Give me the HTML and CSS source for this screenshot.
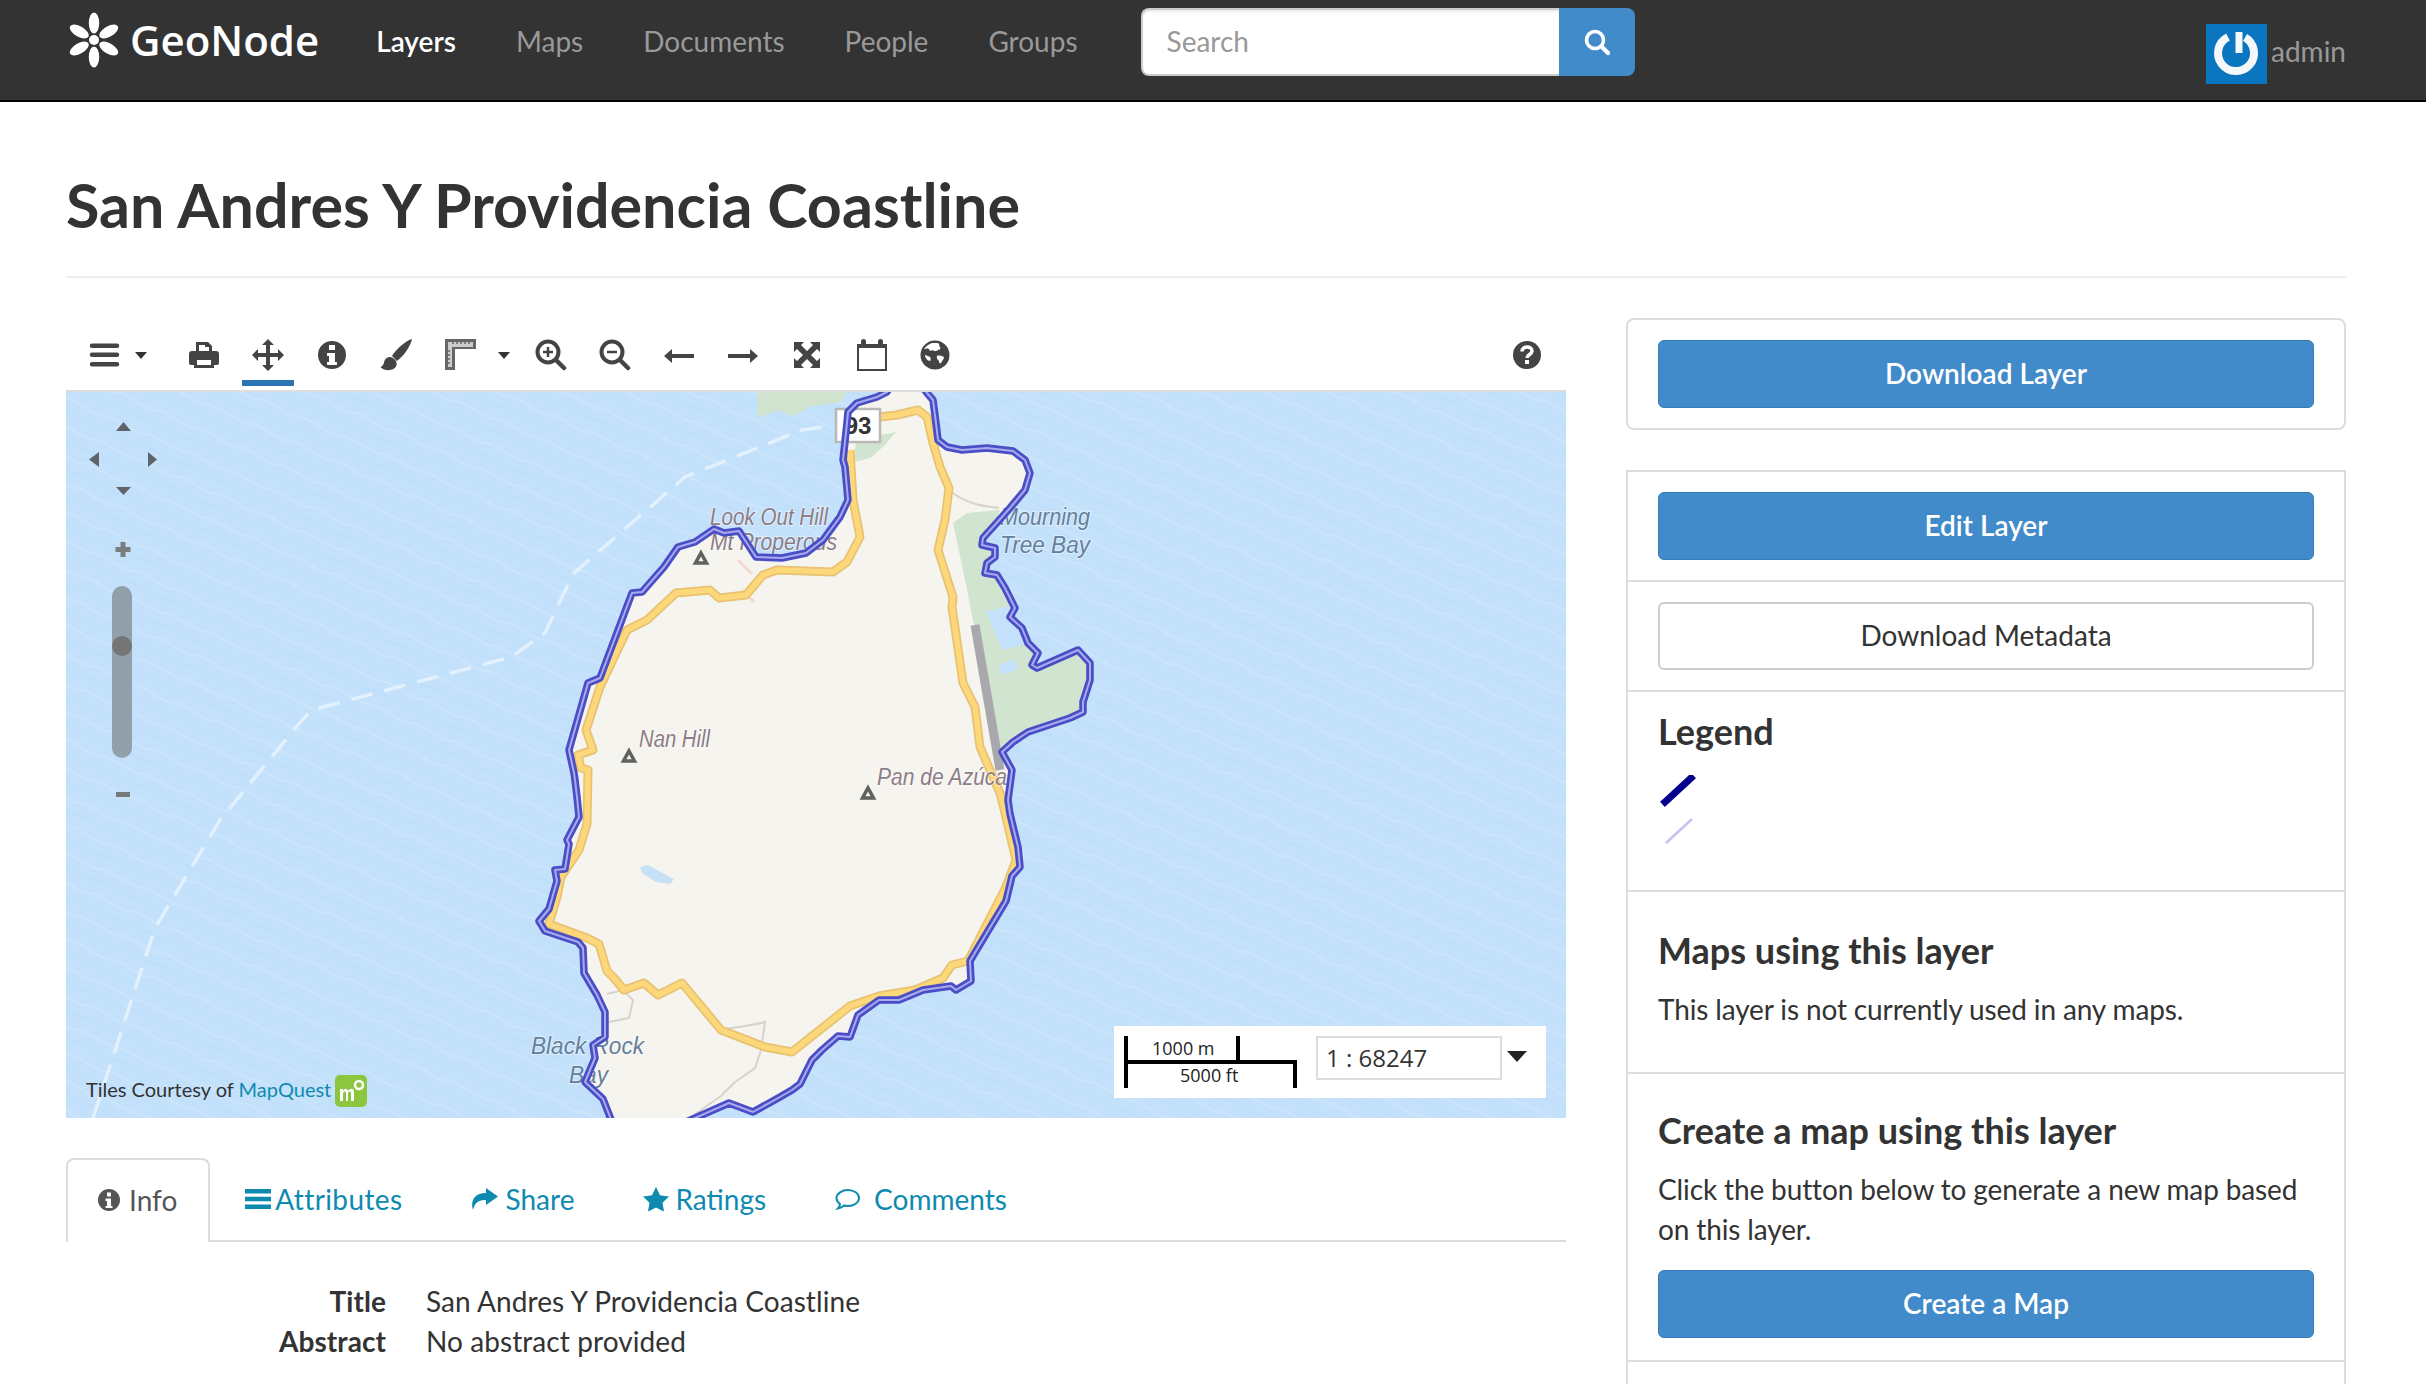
FILE: index.html
```html
<!DOCTYPE html>
<html lang="en">
<head>
<meta charset="utf-8">
<title>San Andres Y Providencia Coastline</title>
<link rel="stylesheet" href="styles.css">
</head>
<body>
<header class="navbar">
  <a class="brand">
    <svg class="brand-mark" viewBox="0 0 52 56">
      <g fill="#fff">
        <circle cx="26" cy="28" r="5"/>
        <ellipse cx="26" cy="11" rx="5.2" ry="10.5"/>
        <ellipse cx="26" cy="11" rx="5.2" ry="10.5" transform="rotate(60 26 28)"/>
        <ellipse cx="26" cy="11" rx="5.2" ry="10.5" transform="rotate(120 26 28)"/>
        <ellipse cx="26" cy="11" rx="5.2" ry="10.5" transform="rotate(180 26 28)"/>
        <ellipse cx="26" cy="11" rx="5.2" ry="10.5" transform="rotate(240 26 28)"/>
        <ellipse cx="26" cy="11" rx="5.2" ry="10.5" transform="rotate(300 26 28)"/>
      </g>
    </svg>
    <span class="brand-name">GeoNode</span>
  </a>
  <nav class="nav-links">
    <a class="nav-link is-active">Layers</a>
    <a class="nav-link">Maps</a>
    <a class="nav-link">Documents</a>
    <a class="nav-link">People</a>
    <a class="nav-link">Groups</a>
  </nav>
  <form class="search">
    <input class="search-input" type="text" placeholder="Search">
    <button class="search-btn" type="button" aria-label="Search">
      <svg class="search-icon" viewBox="0 0 28 28"><circle cx="12" cy="12" r="8.5" fill="none" stroke="#fff" stroke-width="3.6"/><path d="M18.5 18.5L25 25" stroke="#fff" stroke-width="4.2" stroke-linecap="round"/></svg>
    </button>
  </form>
  <div class="user">
    <svg class="avatar" viewBox="0 0 61 60">
      <rect width="61" height="60" fill="#0b76c0"/>
      <path d="M22 13A18 18 0 1 0 39 13.500" fill="none" stroke="#f4f8fb" stroke-width="8"/>
      <path d="M33 8V29" stroke="#f4f8fb" stroke-width="7"/>
    </svg>
    <span class="user-name">admin</span>
  </div>
</header>

<main class="page">
  <h1 class="title">San Andres Y Providencia Coastline</h1>
  <div class="columns">
    <section class="content">
      <div class="toolbar">
        <button class="tool tool-split" type="button">
          <svg class="ico" viewBox="0 0 32 32"><path d="M3 4.500h25a1.500 1.500 0 0 1 0 4.500H3a1.500 1.500 0 0 1 0-4.500zM3 13.500h25a1.500 1.500 0 0 1 0 4.500H3a1.500 1.500 0 0 1 0-4.500zM3 23h25a1.500 1.500 0 0 1 0 4.500H3A1.500 1.500 0 0 1 3 23z"/></svg>
          <span class="caret"></span>
        </button>
        <button class="tool" type="button">
          <svg class="ico" viewBox="0 0 32 32"><path d="M8 13V3h12l4 4v6h-3V8h-4V6H11v7z"/><path d="M4 12h24a3 3 0 0 1 3 3v9a2 2 0 0 1-2 2h-3v3H6v-3H3a2 2 0 0 1-2-2v-9a3 3 0 0 1 3-3zm5 9v5h14v-5z" fill-rule="evenodd"/></svg>
        </button>
        <button class="tool is-on" type="button">
          <svg class="ico" viewBox="0 0 32 32"><path d="M16 0l6 6h-4v8h8v-4l6 6-6 6v-4h-8v8h4l-6 6-6-6h4v-8H6v4l-6-6 6-6v4h8V6h-4z"/></svg>
        </button>
        <button class="tool" type="button">
          <svg class="ico" viewBox="0 0 32 32"><path fill-rule="evenodd" d="M16 2a14 14 0 1 1 0 28 14 14 0 0 1 0-28zM13 6v5h6V6zM11 14v3h2v6h-2v3h10v-3h-2v-9z"/></svg>
        </button>
        <button class="tool" type="button">
          <svg class="ico" viewBox="0 0 32 32"><path d="M32 0c-5 1-16 10-20 17l5 5C24 17 31 6 32 0z"/><path d="M10 18c-3.500 0-5.500 2.500-6 5.500-.4 2-1.500 3.500-3.500 4.500C5 33 15 32 16.500 26c1-3.500-2.500-7.500-6.500-8z"/></svg>
        </button>
        <button class="tool tool-split-r" type="button">
          <svg class="ico" viewBox="0 0 32 32"><path fill="#666" fill-rule="evenodd" d="M1 0h31v10H11v21H1zM4 3v25h4V8h21V3z"/><path fill="#ccc" d="M4 3h25v5H8v20H4z"/><path d="M9 3v2M13 3v2M17 3v2M21 3v2M25 3v2M4 12h2M4 16h2M4 20h2M4 24h2" stroke="#666" stroke-width="1.500"/></svg>
          <span class="caret"></span>
        </button>
        <button class="tool" type="button">
          <svg class="ico" viewBox="0 0 32 32"><circle cx="13" cy="13" r="10.500" fill="none" stroke="#444" stroke-width="4"/><path d="M21 21l8 8" stroke="#444" stroke-width="4.500" stroke-linecap="round"/><path d="M13 8v10M8 13h10" stroke="#444" stroke-width="2.500"/></svg>
        </button>
        <button class="tool" type="button">
          <svg class="ico" viewBox="0 0 32 32"><circle cx="13" cy="13" r="10.500" fill="none" stroke="#444" stroke-width="4"/><path d="M21 21l8 8" stroke="#444" stroke-width="4.500" stroke-linecap="round"/><path d="M8 13h10" stroke="#444" stroke-width="2.500"/></svg>
        </button>
        <button class="tool" type="button">
          <svg class="ico" viewBox="0 0 32 32"><path d="M31 15v4H9v5L1 17l8-7v5z"/></svg>
        </button>
        <button class="tool" type="button">
          <svg class="ico" viewBox="0 0 32 32"><path d="M1 15v4h22v5l8-7-8-7v5z"/></svg>
        </button>
        <button class="tool" type="button">
          <svg class="ico" viewBox="0 0 32 32"><path d="M3 3h10l-3 3 6 6 6-6-3-3h10v10l-3-3-6 6 6 6 3-3v10H19l3-3-6-6-6 6 3 3H3V19l3 3 6-6-6-6-3 3z"/></svg>
        </button>
        <button class="tool tool-cal" type="button">
          <svg class="ico" viewBox="0 0 32 32"><path fill-rule="evenodd" d="M1 5h4V2.500a2.500 2.500 0 0 1 5 0V5h12V2.500a2.500 2.500 0 0 1 5 0V5h4v27H1zM3 9v21h26V9z"/></svg>
        </button>
        <button class="tool" type="button">
          <svg class="ico" viewBox="0 0 32 32"><circle cx="16" cy="16" r="14.500"/><path fill="#fff" d="M13 4c-3 1-6 3-8 6 2 0 3-1 5 0 0 2 2 2 4 1 1 2 4 1 5 0 3 0 3-3 1-4 1-1 0-3-2-3zM18 17c2-1 5 0 7 1 0 2-2 4-3 6-1 1-2 0-2-2-1-1-3-3-2-5zM6 16c1 0 3 1 5 2 1 2 1 3 0 4-2 0-5-3-5-6z"/></svg>
        </button>
        <button class="tool tool-help" type="button">
          <svg class="ico" viewBox="0 0 32 32"><circle cx="16" cy="16" r="14"/><path d="M11 12.500c0-6 10-6 10-.5 0 3.500-5 3.500-5 7" fill="none" stroke="#fff" stroke-width="3.500"/><rect x="14" y="21" width="4" height="4" fill="#fff"/></svg>
        </button>
      </div>

      <div class="map">
        <svg class="map-canvas" viewBox="0 0 1500 728" preserveAspectRatio="none">
          <defs>
            <pattern id="waves" width="90" height="26" patternUnits="userSpaceOnUse" patternTransform="rotate(24)">
              <rect width="90" height="26" fill="#c3e1fb"/>
              <path d="M0 8c15-5 30 5 45 0s30 5 45 0" fill="none" stroke="#cae5fc" stroke-width="2.500"/>
              <path d="M0 20c15-4 30 4 45 0s30 4 45 0" fill="none" stroke="#bedef9" stroke-width="1.500"/>
            </pattern>
            <path id="road" d="M814 27L831 25 852 20 861 27 867 53 874 77 883 98 879 130 872 160 887 207 886 217 897 293 909 317 914 357 924 380 934 403 940 427 950 470 940 497 902 571 886 575 877 588 849 600 813 606 784 616 726 662 699 657 655 640 616 593 592 605 578 593 558 600 548 588 541 581 533 554 521 548 483 534 491 507 495 487 513 460 521 434 522 380 515 378 512 365 527 360 520 340 534 297 561 240 581 230 610 203 644 200 653 208 680 205 697 185 711 180 767 182 781 172 794 147 787 110 784 60"/>
            <path id="coast-east" d="M855-5L861 3 867 10 870 33 872 50 881 57 896 60 921 58 947 61 959 70 964 83 959 100 944 118 927 137 917 148 916 155 929 158 929 167 921 173 919 183 931 185 939 198 949 218 944 227 956 238 962 253 972 263 966 275 971 278 1012 260 1024 273 1024 290 1017 312 1017 322 1004 328 962 342 947 352 936 362 946 380 942 410 944 424 952 457 954 477 946 486 940 511 904 571 905 591 890 600 885 596 857 600 833 610 813 610 792 625 784 647 772 646 756 660 746 670 734 694 726 700 714 707 687 722 663 713 620 732"/>
            <path id="coast-west" d="M546 732L537 709 519 692 529 668 527 655 539 647 539 622 531 605 518 583 517 558 512 552 479 541 473 531 483 519 491 491 489 480 499 479 503 454 501 450 513 427 511 407 509 390 508 383 503 360 522 293 534 288 566 203 576 202 598 177 612 157 629 152 648 139 658 143 673 141 690 167 716 168 740 163 757 150 774 127 782 110 779 77 777 70 781 33 782 22 791 13 811 7 821 2 825-5"/>
          </defs>
          <rect width="1500" height="728" fill="url(#waves)"/>
          <path d="M27 728L89 538 154 430 236 330 246 320 445 267 479 243 498 203 508 183 619 87 736 40 757 37" fill="none" stroke="#e2f1fd" stroke-width="3.500" stroke-dasharray="22 12"/>
          <path d="M691 0h90l-5 12-30 4-20 10-14-6-20 8z" fill="#cfe3cf"/>
          <path fill="#f6f4ee" d="M855-5L861 3 867 10 870 33 872 50 881 57 896 60 921 58 947 61 959 70 964 83 959 100 944 118 927 137 917 148 916 155 929 158 929 167 921 173 919 183 931 185 939 198 949 218 944 227 956 238 962 253 972 263 966 275 971 278 1012 260 1024 273 1024 290 1017 312 1017 322 1004 328 962 342 947 352 936 362 946 380 942 410 944 424 952 457 954 477 946 486 940 511 904 571 905 591 890 600 885 596 857 600 833 610 813 610 792 625 784 647 772 646 756 660 746 670 734 694 726 700 714 707 687 722 663 713 620 732 546 732 537 709 519 692 529 668 527 655 539 647 539 622 531 605 518 583 517 558 512 552 479 541 473 531 483 519 491 491 489 480 499 479 503 454 501 450 513 427 511 407 509 390 508 383 503 360 522 293 534 288 566 203 576 202 598 177 612 157 629 152 648 139 658 143 673 141 690 167 716 168 740 163 757 150 774 127 782 110 779 77 777 70 781 33 782 22 791 13 811 7 821 2 825-5z"/>
          <path fill="#d0e4d0" d="M887 133L901 123 934 120 927 137 917 148 916 155 929 158 929 167 921 173 919 183 931 185 939 198 949 218 944 227 956 238 962 253 972 263 966 275 971 278 1012 260 1024 273 1024 290 1017 312 1017 322 1004 328 962 342 947 352 936 362 927 323 911 250 897 180z"/>
          <path fill="#d0e4d0" d="M790 50l40-8-12 14-14 12-16 4z"/>
          <path fill="#c3e1fb" d="M920 222l22-6 10 20 8 18-24 6-8-20zM932 275l16-6 4 10-16 6z"/>
          <path fill="#c6e0f6" d="M574 477l8-2 26 14-4 5-14-2-14-9z"/>
          <path d="M909 235l25 145" stroke="#a9a9ad" stroke-width="9" fill="none"/>
          <path fill="none" stroke="#f1d9d0" stroke-width="3" d="M672 170l14 14M676 200l12 12"/>
          <path fill="none" stroke="#d6d3cc" stroke-width="2" d="M883 100c14 12 30 16 50 18M655 640c20-4 40-6 44-8l-4 28-6 18-20 14-14 14-20 14-8 6M541 604l16-4 10 10-4 18-20 4"/>
          <g fill="none" stroke-linejoin="round">
            <use href="#road" stroke="#e8c272" stroke-width="9"/>
            <use href="#road" stroke="#fdd87a" stroke-width="5.500"/>
          </g>
          <g fill="none" stroke="#5d625c" stroke-width="3.500">
            <path d="M635 163l5.500 10h-11z"/>
            <path d="M563 361l5.500 10h-11z"/>
            <path d="M802 398l5.500 10h-11z"/>
          </g>
          <text class="map-label land" x="644" y="135" textLength="118" lengthAdjust="spacingAndGlyphs">Look Out Hill</text>
          <text class="map-label land" x="644" y="160" textLength="127" lengthAdjust="spacingAndGlyphs">Mt Properous</text>
          <text class="map-label land" x="573" y="357" textLength="71" lengthAdjust="spacingAndGlyphs">Nan Hill</text>
          <text class="map-label land" x="811" y="395" textLength="130" lengthAdjust="spacingAndGlyphs">Pan de Azúca</text>
          <text class="map-label water" x="934" y="135" textLength="90" lengthAdjust="spacingAndGlyphs">Mourning</text>
          <text class="map-label water" x="934" y="163" textLength="90" lengthAdjust="spacingAndGlyphs">Tree Bay</text>
          <text class="map-label water" x="465" y="664" textLength="113" lengthAdjust="spacingAndGlyphs">Black Rock</text>
          <text class="map-label water" x="503" y="693" textLength="39" lengthAdjust="spacingAndGlyphs">Bay</text>
          <rect x="770" y="19" width="44" height="33" fill="#fff" stroke="#b8b8b4" stroke-width="2.500"/>
          <text class="map-shield" x="792" y="44">93</text>
          <g fill="none" stroke-linejoin="round">
            <use href="#coast-east" stroke="#4a4ec6" stroke-width="7.500"/>
            <use href="#coast-west" stroke="#4a4ec6" stroke-width="7.500"/>
            <use href="#coast-east" stroke="#a9abee" stroke-width="2"/>
            <use href="#coast-west" stroke="#a9abee" stroke-width="2"/>
          </g>
          <g fill="#5f6468">
            <path d="M57.500 32l7.500 9H50z"/>
            <path d="M33 62l-10 7.500 10 7.500z"/>
            <path d="M82 62l9 7.500-9 7.500z"/>
            <path d="M50 97h15l-7.500 8z"/>
            <path fill="#7a7d80" d="M54.500 152h5v5h5v5h-5v5h-5v-5h-5v-5h5z"/>
            <rect x="46" y="196" width="20" height="172" rx="10" fill="#91a0ab"/>
            <circle cx="56" cy="256" r="10" fill="#757575"/>
            <rect x="50" y="402" width="14" height="5" fill="#75797c"/>
          </g>
        </svg>
        <div class="attribution">
          <span class="attr-text">Tiles Courtesy of <a class="attr-link">MapQuest</a></span>
          <svg class="attr-logo" viewBox="0 0 32 32"><rect width="32" height="32" rx="5" fill="#8cc63f"/><path d="M5 26V14h3v2c2-3 4-3 5 0 2-3 6-3 6 1v9h-3v-8c0-2-2-2-3 0v8h-2v-8c0-2-2-2-3 0v8z" fill="#fff"/><circle cx="24" cy="10" r="4" fill="none" stroke="#fff" stroke-width="2.500"/></svg>
        </div>
        <div class="scale-box">
          <div class="scale-bars">
            <span class="scale-tick tick-a"></span>
            <span class="scale-tick tick-b"></span>
            <span class="scale-tick tick-c"></span>
            <span class="scale-rule"></span>
            <span class="scale-m">1000 m</span>
            <span class="scale-ft">5000 ft</span>
          </div>
          <div class="scale-input">1 : 68247</div>
          <span class="scale-caret"></span>
        </div>
      </div>

      <ul class="tabs">
        <li class="tab tab-info is-current">
          <svg class="tab-ico" viewBox="0 0 24 24"><path fill="currentColor" fill-rule="evenodd" d="M12 1a11 11 0 1 1 0 22 11 11 0 0 1 0-22zM10 4.500v4h4v-4zM8.500 10.500V13H10v5H8.500v2h7v-2H14v-7.500z"/></svg>
          Info
        </li>
        <li class="tab tab-attrs">
          <svg class="tab-ico" viewBox="0 0 26 24"><path fill="currentColor" d="M0 2h26v4.500H0zM0 9.800h26v4.500H0zM0 17.500h26V22H0z"/></svg>
          Attributes
        </li>
        <li class="tab tab-share">
          <svg class="tab-ico" viewBox="0 0 28 24"><path fill="currentColor" d="M16 1l12 8.500L16 18v-5c-7 0-11 2-13 10-3-10 2-17 13-17z"/></svg>
          Share
        </li>
        <li class="tab tab-ratings">
          <svg class="tab-ico" viewBox="0 0 26 24"><path fill="currentColor" d="M13 0l4 8.300 9 1.200-6.500 6.300 1.600 8.900L13 20.500l-8.100 4.200 1.600-8.900L0 9.500l9-1.200z"/></svg>
          Ratings
        </li>
        <li class="tab tab-comments">
          <svg class="tab-ico" viewBox="0 0 26 24"><path fill="none" stroke="currentColor" stroke-width="2" d="M13 3c6 0 11 3.500 11 8s-5 8-11 8c-1.500 0-2.500 0-4-.5-1.500 1.500-3.500 2.500-6 3 1.500-1.500 2-3 2-4.500-2-1.500-3.500-3.500-3.500-6C1.500 6.500 7 3 13 3z"/></svg>
          Comments
        </li>
      </ul>

      <dl class="details">
        <dt class="detail-key">Title</dt>
        <dd class="detail-val">San Andres Y Providencia Coastline</dd>
        <dt class="detail-key">Abstract</dt>
        <dd class="detail-val">No abstract provided</dd>
      </dl>
    </section>

    <aside class="sidebar">
      <div class="panel panel-solo">
        <a class="btn btn-primary">Download Layer</a>
      </div>
      <div class="panel">
        <div class="row">
          <a class="btn btn-primary">Edit Layer</a>
        </div>
        <div class="row">
          <a class="btn btn-default">Download Metadata</a>
        </div>
        <div class="row row-legend">
          <h4 class="side-title">Legend</h4>
          <svg class="legend-ico" viewBox="0 0 40 70">
            <path d="M7 27L33 3" stroke="#00008b" stroke-width="7" stroke-linecap="square" fill="none"/>
            <path d="M8 68L34 44" stroke="#c3c3f7" stroke-width="2.500" fill="none"/>
          </svg>
        </div>
        <div class="row row-maps">
          <h4 class="side-title">Maps using this layer</h4>
          <p class="side-text">This layer is not currently used in any maps.</p>
        </div>
        <div class="row row-create">
          <h4 class="side-title">Create a map using this layer</h4>
          <p class="side-text">Click the button below to generate a new map based on this layer.</p>
          <a class="btn btn-primary">Create a Map</a>
        </div>
        <div class="row row-tail"></div>
      </div>
    </aside>
  </div>
</main>
</body>
</html>
```
FILE: styles.css
```css
* { box-sizing: border-box; }
html, body { height: 100%; overflow: hidden; }
body {
  margin: 0;
  background: #fff;
  color: #333;
  font-family: "Lato", "Liberation Sans", sans-serif;
  font-size: 28px;
  line-height: 40px;
}

/* navbar */
.navbar {
  display: flex;
  align-items: flex-start;
  height: 102px;
  padding: 0 80px 0 66px;
  background: #333;
  border-bottom: 2px solid #000;
}
.brand { display: flex; align-items: flex-start; }
.brand-mark { width: 52px; height: 56px; margin: 12px 0 0 2px; }
.brand-name {
  margin: 12px 0 0 10px;
  font-family: "Open Sans", "DejaVu Sans", sans-serif;
  font-size: 42px;
  font-weight: 600;
  line-height: 56px;
  color: #fff;
}
.nav-links { display: flex; gap: 60px; margin: 21px 0 0 57px; }
.nav-link { color: #999; line-height: 40px; }
.nav-link.is-active { color: #fff; font-weight: 600; }
.search { display: flex; margin: 8px 0 0 63px; }
.search-input {
  width: 418px;
  height: 68px;
  padding: 0 24px 3px;
  border: 2px solid #ccc;
  border-right: 0;
  border-radius: 8px 0 0 8px;
  box-shadow: inset 0 2px 2px rgba(0, 0, 0, .08);
  font: 28px "Lato", "Liberation Sans", sans-serif;
  color: #555;
}
.search-input::placeholder { color: #999; opacity: 1; }
.search-btn {
  display: flex;
  align-items: center;
  justify-content: center;
  width: 76px;
  height: 68px;
  padding: 0;
  border: 0;
  border-radius: 0 8px 8px 0;
  background: #428bca;
}
.search-icon { width: 28px; height: 28px; }
.user { display: flex; align-items: flex-start; margin: 24px 0 0 auto; }
.avatar { width: 61px; height: 60px; margin-right: 4px; }
.user-name { color: #999; line-height: 40px; margin-top: 7px; }

/* page */
.page { padding: 0 80px 0 66px; }
.title {
  margin: 0;
  padding: 70px 0 38px;
  border-bottom: 2px solid #eee;
  font-size: 61px;
  line-height: 66px;
  font-weight: 700;
  color: #333;
}
.columns { display: flex; gap: 60px; margin-top: 41px; }
.content { width: 1500px; flex: none; }
.sidebar { width: 720px; flex: none; }

/* toolbar */
.toolbar { display: flex; align-items: flex-start; height: 71px; padding-left: 6px; }
.tool {
  display: flex;
  align-items: center;
  justify-content: center;
  width: 64px;
  height: 72px;
  padding: 0;
  border: 0;
  background: none;
  gap: 14px;
}
.tool-split { width: 100px; justify-content: flex-start; padding-left: 17px; }
.tool-split-r { width: 91px; justify-content: flex-start; padding-left: 16px; }
.tool-split-r .caret { margin-left: 8px; }
.tool-cal { padding-left: 2px; }
.tool-help { margin-left: auto; margin-right: 7px; }
.tool.is-on { border-bottom: 6px solid #2a75b3; width: 52px; height: 67px; margin: 0 6px; padding-top: 11px; }
.ico { width: 32px; height: 32px; fill: #444; flex: none; }
.caret {
  width: 0;
  height: 0;
  border-left: 6px solid transparent;
  border-right: 6px solid transparent;
  border-top: 7px solid #333;
}

/* map */
.map {
  position: relative;
  height: 728px;
  overflow: hidden;
  background: #c3e1fb;
}
.map::after {
  content: "";
  position: absolute;
  left: 0;
  right: 0;
  top: 0;
  height: 2px;
  background: #ddd;
}
.map-canvas { display: block; width: 1500px; height: 728px; }
.map-label { font: italic 23px "Liberation Sans", sans-serif; paint-order: stroke; stroke: rgba(255, 255, 255, .45); stroke-width: 2px; }
.map-label.land { fill: #8d7d88; }
.map-label.water { fill: #65809b; }
.map-shield { font: 700 24px "Liberation Sans", sans-serif; text-anchor: middle; fill: #333; }
.attribution {
  position: absolute;
  left: 20px;
  bottom: 10px;
  display: flex;
  align-items: center;
  font-size: 20px;
  line-height: 32px;
  color: #333;
}
.attr-text { padding-bottom: 3px; }
.attr-link { color: #0e8ab0; }
.attr-logo { width: 32px; height: 32px; margin-left: 4px; }
.scale-box {
  position: absolute;
  left: 1048px;
  top: 636px;
  display: flex;
  width: 432px;
  height: 72px;
  background: #fff;
  font-family: "Open Sans", "DejaVu Sans", sans-serif;
}
.scale-bars { position: relative; width: 202px; height: 72px; flex: none; }
.scale-tick { position: absolute; width: 4px; background: #000; }
.tick-a { left: 10px; top: 10px; height: 52px; }
.tick-b { left: 122px; top: 10px; height: 28px; }
.tick-c { left: 179px; top: 34px; height: 28px; }
.scale-rule { position: absolute; left: 10px; top: 34px; width: 173px; height: 4px; background: #000; }
.scale-m, .scale-ft { position: absolute; font-size: 18px; line-height: 20px; color: #222; }
.scale-m { left: 38px; top: 12px; }
.scale-ft { left: 66px; top: 39px; }
.scale-input {
  width: 186px;
  height: 44px;
  margin-top: 10px;
  padding-left: 8px;
  border: 2px solid #ddd;
  font-size: 24px;
  line-height: 40px;
  color: #333;
}
.scale-caret {
  width: 0;
  height: 0;
  margin: 25px 0 0 5px;
  border-left: 10px solid transparent;
  border-right: 10px solid transparent;
  border-top: 11px solid #222;
}

/* tabs */
.tabs {
  display: flex;
  height: 84px;
  margin: 40px 0 0;
  padding: 0;
  list-style: none;
  border-bottom: 2px solid #ddd;
}
.tab {
  display: flex;
  align-items: center;
  height: 84px;
  margin-right: 4px;
  padding: 0 32px 3px;
  color: #0e8ab0;
}
.tab.is-current {
  color: #555;
  background: #fff;
  border: 2px solid #ddd;
  border-bottom: 0;
  border-radius: 8px 8px 0 0;
}
.tab-ico { width: 26px; height: 24px; margin-right: 6px; flex: none; }
.tab-info { padding: 0 31px 3px 28px; }
.tab-info .tab-ico { margin-right: 7px; }
.tab-attrs { padding: 0 31px 3px 31px; letter-spacing: .4px; }
.tab-attrs .tab-ico { margin-right: 4px; }
.tab-share { padding-right: 33px; }
.tab-share .tab-ico { width: 28px; margin-right: 8px; }
.tab-ratings { padding-right: 33px; }
.tab-comments .tab-ico { margin-right: 13px; }

/* definition list */
.details {
  display: grid;
  grid-template-columns: 320px 1fr;
  column-gap: 40px;
  margin: 39px 0 0;
  letter-spacing: .08px;
}
.detail-key { text-align: right; font-weight: 700; }
.detail-val { margin: 0; }

/* sidebar */
.panel {
  margin-bottom: 40px;
  border: 2px solid #ddd;
  border-bottom: 0;
}
.panel-solo {
  margin-top: -1px;
  padding: 20px 30px;
  border-bottom: 2px solid #ddd;
  border-radius: 8px;
}
.row { padding: 20px 30px; border-bottom: 2px solid #ddd; }
.btn {
  display: block;
  height: 68px;
  border-radius: 6px;
  font-size: 28px;
  line-height: 64px;
  text-align: center;
  border: 1px solid transparent;
}
.btn-primary { background: #428bca; border-color: #357ebd; color: #fff; font-weight: 600; }
.btn-default { background: #fff; border: 2px solid #ccc; color: #333; line-height: 63px; }
.side-title { margin: -1px 0 0; font-size: 36px; line-height: 40px; font-weight: 700; color: #333; }
.side-text { margin: 19px 0 0; letter-spacing: -.13px; }
.row-legend { height: 200px; }
.legend-ico { display: block; width: 40px; height: 70px; margin: 24px 0 0; }
.row-maps { height: 182px; padding-top: 39px; }
.row-create { height: 288px; padding-top: 37px; }
.row-create .btn { margin-top: 21px; }
.row-tail { height: 100px; }
```
